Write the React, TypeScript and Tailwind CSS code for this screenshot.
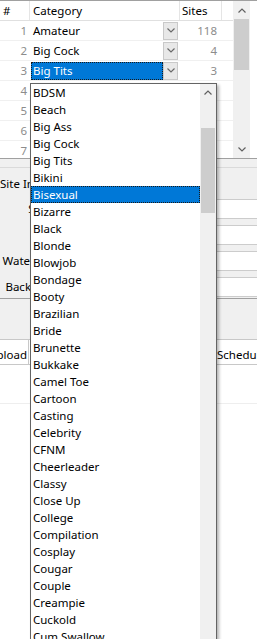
import React from 'react';

type Row = { n: number; cat?: string; sites?: string; selected?: boolean };

const rows: Row[] = [
  { n: 1, cat: 'Amateur', sites: '118' },
  { n: 2, cat: 'Big Cock', sites: '4' },
  { n: 3, cat: 'Big Tits', sites: '3', selected: true },
  { n: 4 },
  { n: 5 },
  { n: 6 },
  { n: 7 },
];

const categories = [
  'BDSM', 'Beach', 'Big Ass', 'Big Cock', 'Big Tits', 'Bikini', 'Bisexual', 'Bizarre',
  'Black', 'Blonde', 'Blowjob', 'Bondage', 'Booty', 'Brazilian', 'Bride', 'Brunette',
  'Bukkake', 'Camel Toe', 'Cartoon', 'Casting', 'Celebrity', 'CFNM', 'Cheerleader',
  'Classy', 'Close Up', 'College', 'Compilation', 'Cosplay', 'Cougar', 'Couple',
  'Creampie', 'Cuckold', 'Cum Swallow', 'Cumshot', 'Curvy',
];

const fields = [
  { label: 'Server:' },
  { label: 'Path:' },
  { label: 'Watermark:' },
  { label: 'Back Color:' },
];

const Chevron = ({ up = false }: { up?: boolean }) => (
  <svg width="8" height="5" viewBox="0 0 8 5">
    <polyline
      points={up ? '0.5,4.5 4,1 7.5,4.5' : '0.5,0.5 4,4 7.5,0.5'}
      fill="none"
      stroke="currentColor"
      strokeWidth="1.2"
    />
  </svg>
);

const GridRow = ({ row }: { row: Row }) => (
  <div className="flex h-[20px] border-b border-[#f0f0f0]">
    <div className="w-[30px] pr-[3px] text-right leading-[19px] text-[#8c8c8c]">{row.n}</div>
    <div className="flex w-[150px] items-center pr-[2px]">
      {row.selected ? (
        <div className="ml-px h-[18px] flex-1 bg-[#0078d7] pl-[2px] leading-[18px] text-white outline-1 -outline-offset-1 outline-dotted outline-[#1a1a1a]">
          {row.cat}
        </div>
      ) : (
        <div className="flex-1 pl-[3px] leading-[19px]">{row.cat}</div>
      )}
      {row.cat && (
        <div className="flex h-[18px] w-[15px] items-center justify-center border border-[#c9c9c9] bg-[#e8e8e8] text-[#6a6a6a]">
          <Chevron />
        </div>
      )}
    </div>
    <div className="w-[42px] pr-[5px] text-right leading-[19px] text-[#8c8c8c]">{row.sites}</div>
  </div>
);

const App = () => {
  return (
    <div className="relative h-[639px] w-[257px] overflow-hidden bg-white font-['Noto_Sans',sans-serif] text-[11.5px] text-black">
      {/* category grid */}
      <div className="flex h-[159px] overflow-hidden border-y border-[#a0a0a0]">
        <div className="flex w-[233px] flex-col">
          <div className="flex h-[20px] border-b border-[#e0e0e0] leading-[20px]">
            <div className="w-[30px] border-r border-[#e5e5e5] pl-[3px]">#</div>
            <div className="w-[150px] border-r border-[#e5e5e5] pl-[3px]">Category</div>
            <div className="w-[42px] border-r border-[#e5e5e5] pl-[2px]">Sites</div>
          </div>
          {rows.map((r) => (
            <GridRow key={r.n} row={r} />
          ))}
        </div>
        <div className="flex w-[17px] flex-col bg-[#f0f0f0] text-[#606060]">
          <div className="flex h-[18px] items-center justify-center">
            <Chevron up />
          </div>
          <div className="mx-px h-[51px] bg-[#cdcdcd]" />
          <div className="flex-1" />
          <div className="flex h-[18px] items-center justify-center">
            <Chevron />
          </div>
        </div>
        <div className="flex-1" />
      </div>

      {/* site info form */}
      <div className="flex flex-col bg-[#f0f0f0]">
        <div className="h-[9px] border-b border-[#dadada]" />
        <div className="flex h-[31px] items-center whitespace-nowrap">Site Info</div>
        <div className="flex flex-col gap-[6px]">
          {fields.map((f) => (
            <div key={f.label} className="flex h-[20px] items-center">
              <div className="w-[68px] shrink-0 whitespace-nowrap pr-[2px] text-right">{f.label}</div>
              <div className="ml-[7px] h-[20px] flex-1 border border-r-0 border-[#cccccc] bg-white" />
            </div>
          ))}
        </div>
        <div className="mt-px border-b border-[#a0a0a0]" />
      </div>

      {/* schedule list */}
      <div className="h-[40px] bg-[#f0f0f0]" />
      <div className="flex h-[26px] border-y border-[#c8c8c8] bg-white pt-[6px]">
        <div className="-mt-[6px] flex w-[29px] shrink-0 justify-end overflow-hidden border-r border-[#c8c8c8] pr-px pt-[6px]">
          <span className="whitespace-nowrap">Upload</span>
        </div>
        <div className="w-[187px] shrink-0" />
        <div className="whitespace-nowrap pl-px">Schedule</div>
      </div>
      <div className="h-[39px] border-b border-[#eeeeee]" />

      {/* open dropdown list */}
      <div className="absolute left-[30px] top-[83px] flex h-[600px] w-[187px] border border-[#646464] bg-white shadow-[2px_2px_3px_rgba(0,0,0,0.3)]">
        <div className="flex flex-1 flex-col overflow-hidden">
          {categories.map((c) =>
            c === 'Bisexual' ? (
              <div
                key={c}
                className="h-[17px] shrink-0 bg-[#0078d7] pl-[2px] leading-[17px] text-white outline-1 -outline-offset-1 outline-dotted outline-[#1a1a1a]"
              >
                {c}
              </div>
            ) : (
              <div key={c} className="h-[17px] shrink-0 pl-[2px] leading-[17px]">
                {c}
              </div>
            ),
          )}
        </div>
        <div className="flex w-[16px] flex-col bg-[#f0f0f0] text-[#606060]">
          <div className="flex h-[17px] items-center justify-center">
            <Chevron up />
          </div>
          <div className="mx-px mt-[27px] h-[85px] bg-[#cdcdcd]" />
        </div>
      </div>
    </div>
  );
};

export default App;
